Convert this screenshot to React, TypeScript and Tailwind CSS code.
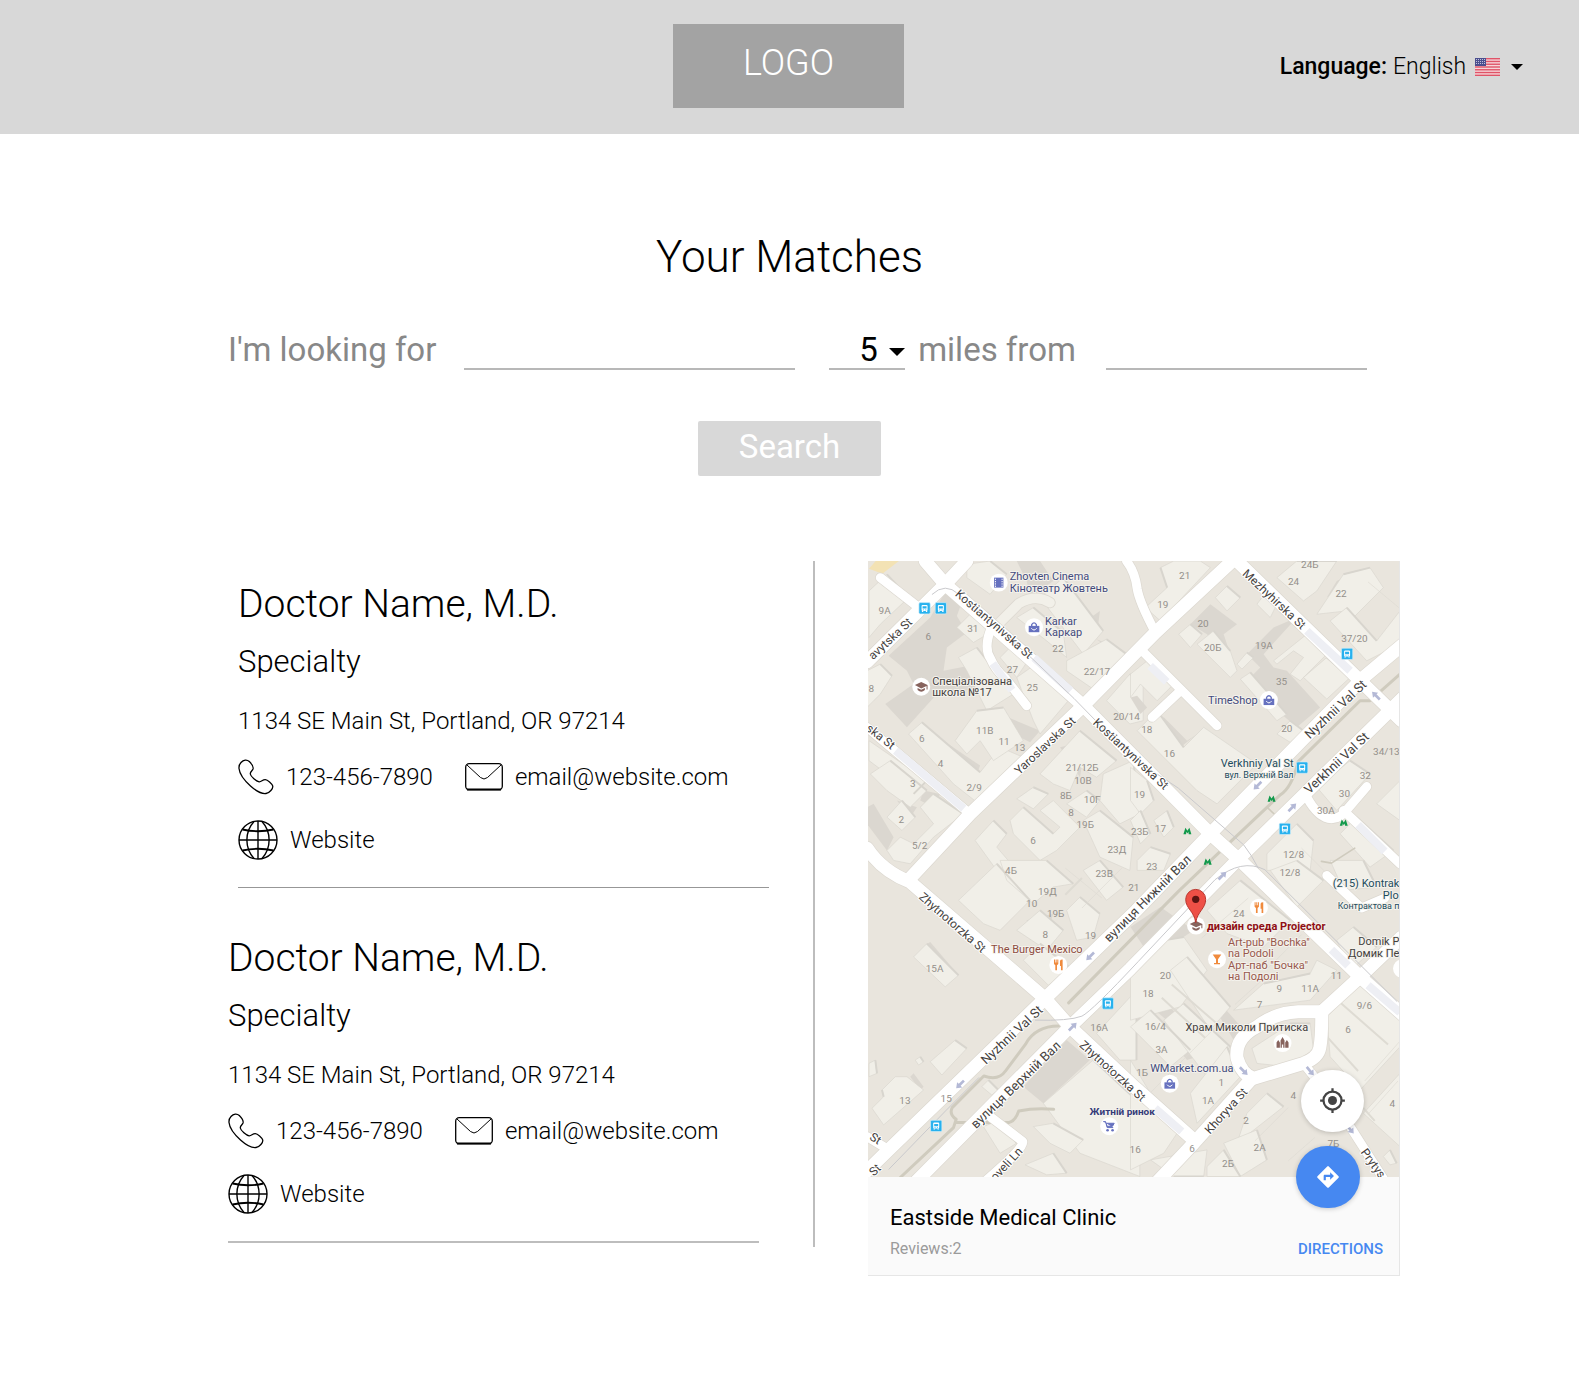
import React from "react";

type Pt = [number, number];

const Caret = ({ className }: { className: string }) => (
  <svg viewBox="0 0 16 8" className={className} aria-hidden="true">
    <path d="M0 0H16L8 8Z" fill="#000" />
  </svg>
);

const UsFlag = () => (
  <svg viewBox="0 0 25 18" className="h-[18px] w-[25px]" aria-hidden="true">
    <rect width="25" height="18" rx="1" fill="#f6d5d9" />
    {[0, 1, 2, 3, 4, 5, 6].map((i) => (
      <rect key={i} y={i * 2.77} width="25" height="1.39" fill="#df5468" />
    ))}
    <rect width="11" height="8" fill="#4b4f8f" />
    {[1.5, 3.5, 5.5].map((y) =>
      [1.5, 3.5, 5.5, 7.5, 9.5].map((x) => <circle key={`${x}-${y}`} cx={x} cy={y} r="0.5" fill="#e6e6f2" />)
    )}
  </svg>
);

const PhoneIcon = () => (
  <svg viewBox="0 0 36 36" className="h-9 w-9 shrink-0" fill="none" stroke="#000" strokeWidth="1.3" strokeLinejoin="round" aria-hidden="true">
    <path d="M3 3.5C5.500 .6 9 .3 11.300 2.500C13.500 4.700 15.800 7.500 15 10C14.300 12 12 12.600 12.300 15C12.700 17.500 18.500 22.500 21.200 22.800C23.500 23 24.500 20.500 27.300 20.600C29.500 20.700 34 24.500 34.700 27C35.300 29.500 31.500 34 28 34.500C24 35 17.500 31.500 12.500 27C7 22 1.500 14.500 1 9.500C.8 7 1.500 5 3 3.500Z" />
  </svg>
);

const MailIcon = () => (
  <svg viewBox="0 0 38 28" className="h-7 w-[38px] shrink-0" fill="none" stroke="#000" aria-hidden="true">
    <rect x="0.7" y="0.7" width="36.600" height="26" rx="3.500" strokeWidth="1.300" />
    <path d="M2 26.500H36" strokeWidth="2" />
    <path d="M2 2L15.500 14.500Q19 17.500 22.500 14.500L36 2" strokeWidth="1" />
  </svg>
);

const GlobeIcon = () => (
  <svg viewBox="0 0 40 40" className="h-10 w-10 shrink-0" fill="none" stroke="#000" strokeWidth="1.400" aria-hidden="true">
    <circle cx="20" cy="20" r="19" />
    <path d="M20 1V39M1 20H39" />
    <path d="M16 1.500C6.500 12 6.500 28 16 38.500M24 1.500C33.500 12 33.500 28 24 38.500" />
    <path d="M4.500 9.500Q20 13 35.500 9.500M4.500 30.500Q20 27 35.500 30.500" strokeWidth="1.800" />
  </svg>
);

function DoctorCard({ className }: { className: string }) {
  return (
    <article className={className}>
      <h2 className="text-[39px] leading-[48px]">Doctor Name, M.D.</h2>
      <p className="mt-[14px] text-[31px] leading-10">Specialty</p>
      <p className="mt-[23px] text-2xl leading-8">1134 SE Main St, Portland, OR 97214</p>
      <div className="mt-5 flex h-10 items-center text-2xl leading-8">
        <a href="tel:123-456-7890" className="flex items-center gap-3">
          <PhoneIcon />
          123-456-7890
        </a>
        <a href="mailto:email@website.com" className="ml-8 flex items-center gap-3">
          <MailIcon />
          email@website.com
        </a>
      </div>
      <a href="#website" className="mt-[23px] flex h-10 w-fit items-center gap-3 text-2xl leading-8">
        <GlobeIcon />
        Website
      </a>
    </article>
  );
}

/* Map artwork is drawn on a 1596 x 1848 grid, three units to a label unit. */

const minorRoads = [
  "M-6 497L304 757",
  "M34 47L150 137",
  "M774 -3Q800 30 806 80Q812 120 861 212",
  "M816 262L1046 492M936 387L851 467",
  "M364 207Q345 260 365 290Q380 325 410 350L474 432",
  "M1316 707Q1350 770 1390 772Q1420 770 1440 740L1496 675",
  "M1426 747L1596 907",
  "M1376 942L1480 1040L1550 1010",
  "M-6 1727L60 1767",
  "M364 1667L462 1742Q468 1760 354 1857",
  "M1306 1507L1380 1600L1446 1697L1550 1860",
];
const majorRoads = [
  "M294 -3L229 67L-6 300",
  "M1110 -20L861 212L644 432L304 757L124 950",
  "M-6 860Q40 930 124 962L529 1312L604 1397L800 1580L976 1737",
  "M1096 -13L1600 477",
  "M1600 1128L1476 1247L1361 1352",
  "M1361 1352H1290Q1220 1355 1166 1397Q1100 1430 1106 1490Q1120 1540 1156 1552L1306 1507Q1350 1490 1355 1460Q1361 1430 1361 1352",
  "M1151 1552L976 1747L860 1870",
  "M169 -3L229 67L644 432L1026 817L1126 907L1476 1247L1606 1362",
  "M1606 247L1486 347L1026 817L804 1047L529 1312L69 1757L-16 1840",
  "M1606 407L1116 887L786 1222L604 1397L144 1860",
];

const lots = {
  nw: [
    "6,90 60,40 125,110 40,190 6,230", "0,330 40,310 75,345 40,400 0,440", "270,200 320,150 370,190 370,215 320,245",
    "300,10 370,0 420,40 370,100 300,50", "450,170 500,140 590,215 600,290 540,240", "520,110 590,50 710,210 650,280",
    "600,300 720,235 780,280 680,385 600,330", "400,290 440,250 490,290 450,350", "450,350 500,315 605,420 520,520 500,480",
    "275,290 330,260 440,400 360,450 300,330", "125,520 165,485 340,635 400,560 470,590 330,725 260,670",
    "265,540 330,450 410,440 470,540 380,600 340,540 300,580", "6,540 180,660 140,700 6,600", "10,640 70,600 180,690 130,740 60,690",
    "60,770 105,720 145,770 105,810", "160,740 200,700 290,760 200,830 130,910 80,900 60,870 100,830 140,850 200,790",
    "520,640 640,510 750,600 690,650 640,620 610,690 560,670", "450,715 500,680 545,700 500,745", "430,780 470,740 560,820 580,800 520,750 560,720 640,800 570,870 520,900 440,820",
    "325,840 380,780 420,820 390,860 450,930 390,930", "600,730 660,690 700,720 660,770", "720,420 790,340 830,360 830,480 790,490",
    "650,780 700,750 800,830 790,930 700,890", "710,640 800,600 820,760 760,790 700,720",
  ],
  ne: [
    "45,140 110,80 90,20 130,0 210,0 240,20 90,180", "255,110 290,75 330,110 290,150", "145,220 180,190 215,220 180,260",
    "200,250 250,210 300,270 320,330 300,350", "380,130 410,90 440,130 420,170", "440,50 500,0 620,0 560,90 520,120",
    "560,160 640,40 720,20 760,80 670,170 650,150", "600,180 650,140 740,240 810,150 810,250 710,300", "430,300 530,220 590,280 510,360 480,340 520,290 490,270 440,310",
    "320,310 350,275 370,290 335,325", "520,350 590,290 660,350 590,415", "330,355 360,335 470,460 440,480", "440,520 480,480 520,510 480,545",
    "0,340 50,300 130,370 80,420 30,370 0,410", "20,510 80,450 160,560 220,500 380,610 260,730 200,690", "0,620 50,660 70,720 30,760 0,720",
    "0,780 30,750 60,820 30,850", "70,780 110,750 130,800 100,830", "20,900 60,860 120,880 100,930 20,930", "410,880 500,790 550,840 540,930 410,930",
    "560,680 660,600 720,640 620,750", "740,730 810,660 810,780", "630,820 680,770 790,870 720,920",
  ],
  sw: [
    "275,120 390,10 490,120 400,210 350,190", "400,0 540,0 620,70 560,80 500,130 420,60", "450,210 520,150 590,210 540,270",
    "600,150 640,110 700,160 680,230 630,240", "650,30 700,0 770,80 720,120", "470,300 520,250 620,330 545,375", "140,290 180,250 275,345 235,380",
    "190,605 265,540 300,565 225,645", "145,600 160,590 170,605 155,615", "15,745 50,710 45,690 85,650 120,650 170,690 50,795",
    "6,610 25,600 30,640 6,650", "345,680 365,660 395,690 375,705", "530,730 680,600 820,730 820,950 640,880", "690,520 810,390 810,600 760,600",
    "500,800 560,790 650,840 610,880 550,850", "475,915 560,880 600,940 540,945", "350,800 400,780 450,850 400,880",
  ],
  se: [
    "0,350 100,240 160,230 230,330 150,440 0,480", "120,330 170,290 300,440 240,510", "0,500 60,450 180,570 120,620", "100,480 160,430 300,560 230,650",
    "180,700 290,560 330,650 200,790", "230,150 330,60 480,180 400,260 290,220", "420,30 500,0 580,60 500,140", "310,450 400,370 540,340 560,300 620,330 540,420",
    "365,565 480,490 540,490 550,570 470,620 380,610", "590,470 690,370 810,470 810,560 690,690 600,590", "700,760 810,640 810,860", "350,760 410,700 460,740 320,850",
    "60,900 130,950 220,950 230,870", "280,850 380,810 410,900 330,950", "230,920 280,870 330,950 230,950", "760,890 780,870 800,910 780,915", "0,600 60,700 160,790 100,880 0,930",
    "600,0 700,0 740,80 640,90", "620,240 670,200 740,260 660,330",
  ],
};
const shades = {
  nw: [
    "65,285 190,170 240,85 290,110 270,165 300,215 240,260 230,330 330,310 360,380 210,400 120,500 55,430 140,370 120,330", "0,740 20,730 80,830 60,870 0,790", "170,500 340,615 330,640 150,510",
    "355,430 400,460 520,510 490,545 400,500", "615,210 700,150 690,230", "690,235 770,270 750,280", "170,690 220,700 200,740 160,720", "90,720 150,740 130,770",
    "580,560 600,555 650,590 640,650", "450,0 520,0 560,60 490,110 480,60",
  ],
  ne: [
    "180,190 240,130 320,190 280,220 300,280 260,260 230,220", "430,200 500,170 400,280 430,320 470,330 570,440 500,500 430,440 350,360 390,320 350,280",
    "0,410 20,405 50,440 30,460", "80,480 100,470 170,540 200,520 150,560", "620,60 640,50 660,70 590,110", "550,370 580,350 600,370 580,390", "220,610 235,598 256,618 242,630",
  ],
  sw: ["175,255 190,245 275,345 262,350", "400,80 350,100 340,150 380,180 350,130", "470,680 600,540 670,600 530,730", "130,650 140,640 170,680 160,690", "480,180 560,160 540,220 490,240", "680,600 820,710 820,740", "770,510 820,450 820,500"],
  se: ["0,200 90,140 190,210 130,250 60,290", "40,420 70,400 150,470 120,490", "110,530 140,520 200,590 170,600", "250,440 270,430 350,520 310,540", "320,180 345,165 390,200 370,220", "620,450 690,390 790,520 740,530", "700,540 760,590 690,640"],
};
const origins: Record<keyof typeof lots, string> = {
  nw: "translate(-6 -3)",
  ne: "translate(786 -3)",
  sw: "translate(-6 897)",
  se: "translate(786 897)",
};
const quadrants = ["nw", "ne", "sw", "se"] as const;

const houseNumbers: [string, number, number][] = [
  ["9A", 47, 145], ["6", 178, 222], ["31", 312, 197], ["22", 568, 259], ["27", 431, 321], ["22/17", 685, 328], ["25", 491, 375],
  ["20/14", 774, 464], ["11В", 348, 506], ["11", 406, 539], ["13", 453, 557], ["6", 159, 528], ["4", 215, 603], ["2/9", 316, 675],
  ["3", 132, 665], ["2", 97, 773], ["5/2", 152, 850], ["21/12Б", 641, 617], ["10В", 643, 654], ["8Б", 592, 701], ["10Г", 671, 713],
  ["8", 607, 752], ["19Б", 650, 788], ["6", 493, 835], ["23Д", 745, 863], ["4Б", 427, 925], ["8", 7, 380],
  ["21", 949, 40], ["19", 883, 127], ["20", 1004, 182], ["20Б", 1033, 257], ["19A", 1187, 250], ["24", 1276, 57], ["22", 1419, 92],
  ["24Б", 1325, 6], ["37/20", 1459, 230], ["35", 1240, 357], ["20", 1256, 500], ["18", 835, 502], ["16", 903, 575], ["19", 813, 698],
  ["23Б", 814, 809], ["17", 876, 799], ["23", 850, 914], ["34/13", 1555, 568], ["32", 1492, 639], ["30", 1429, 695], ["30A", 1373, 746],
  ["12/8", 1276, 877], ["12/8", 1265, 933], ["23В", 707, 935], ["19Д", 536, 988], ["21", 796, 978], ["10", 489, 1025], ["19Б", 561, 1054],
  ["8", 530, 1118], ["19", 666, 1122], ["15A", 197, 1221], ["16A", 692, 1397], ["13", 108, 1616], ["15", 232, 1612], ["24", 1112, 1055],
  ["20", 891, 1241], ["18", 839, 1295], ["11", 1405, 1240], ["9", 1233, 1282], ["11A", 1326, 1279], ["7", 1174, 1328], ["9/6", 1489, 1331],
  ["16/4", 861, 1394], ["6", 1440, 1403], ["3A", 879, 1465], ["1Б", 821, 1532], ["1", 1059, 1564], ["4", 1275, 1602], ["1A", 1019, 1617],
  ["4", 1573, 1625], ["2", 1133, 1678], ["16", 800, 1765], ["6", 971, 1762], ["2A", 1174, 1757], ["7Б", 1396, 1747], ["2Б", 1079, 1807],
];

const streets: [string, number, number, number, number, "start" | "middle" | "end"][] = [
  ["Kostiantynivska St", 376, 187, 41, 12, "middle"],
  ["Kostiantynivska St", 787, 577, 43, 12, "middle"],
  ["Mezhyhirska St", 1218, 112, 43, 12, "middle"],
  ["avytska St", 124, 175, -43, 12, "end"],
  ["ska St", 74, 555, 38, 12, "end"],
  ["Yaroslavska St", 529, 552, -43, 12, "middle"],
  ["Nyzhnii Val St", 1403, 444, -43, 13, "middle"],
  ["Verkhnii Val St", 1406, 605, -43, 13, "middle"],
  ["вулиця Нижній Вал", 838, 1012, -45, 13, "middle"],
  ["Zhytnotorzka St", 251, 1084, 41, 12, "middle"],
  ["Nyzhnii Val St", 430, 1422, -43, 13, "middle"],
  ["вулиця Верхній Вал", 442, 1572, -44, 13, "middle"],
  ["Zhytnotorzka St", 732, 1530, 42, 12, "middle"],
  ["Khoryva St", 1073, 1650, -48, 12, "middle"],
  ["Prytys", 1486, 1767, 54, 12, "start"],
  ["oveli Ln", 455, 1765, -47, 12, "end"],
  ["St", 30, 1816, -43, 12, "end"],
  ["St", 34, 1742, 32, 12, "end"],
];

const places: [string, number, number, string, number, "start" | "middle" | "end", number][] = [
  ["Zhovten Cinema", 423, 43, "#434a7c", 11, "start", 400],
  ["Кінотеатр Жовтень", 423, 78, "#434a7c", 11, "start", 400],
  ["Karkar", 529, 177, "#434a7c", 11, "start", 400],
  ["Каркар", 529, 211, "#434a7c", 11, "start", 400],
  ["Спеціалізована", 190, 357, "#43403d", 11, "start", 400],
  ["школа №17", 190, 391, "#43403d", 11, "start", 400],
  ["TimeShop", 1168, 414, "#434a7c", 11, "end", 400],
  ["Verkhniy Val St", 1276, 604, "#1d4c5d", 11, "end", 400],
  ["вул. Верхній Вал", 1276, 636, "#1d4c5d", 9, "end", 400],
  ["The Burger Mexico", 367, 1163, "#8d4b40", 11, "start", 400],
  ["(215) Kontrak", 1594, 966, "#1d4c5d", 11, "end", 400],
  ["Plo", 1592, 1000, "#1d4c5d", 11, "end", 400],
  ["Контрактова п", 1594, 1032, "#1d4c5d", 9, "end", 400],
  ["дизайн среда Projector", 1016, 1093, "#8f0f14", 11, "start", 700],
  ["Art-pub \"Bochka\"", 1079, 1141, "#98584c", 11, "start", 400],
  ["na Podoli", 1079, 1175, "#98584c", 11, "start", 400],
  ["Арт-паб \"Бочка\"", 1079, 1210, "#98584c", 11, "start", 400],
  ["на Подолі", 1079, 1244, "#98584c", 11, "start", 400],
  ["Domik P", 1594, 1140, "#43403d", 11, "end", 400],
  ["Домик Пе", 1594, 1174, "#43403d", 11, "end", 400],
  ["Храм Миколи Притиска", 951, 1398, "#43403d", 11, "start", 400],
  ["WMarket.com.ua", 845, 1520, "#434a7c", 11, "start", 400],
  ["Житній ринок", 663, 1649, "#353b78", 10, "start", 700],
];

const busStops: Pt[] = [[167, 139], [216, 139], [1437, 276], [1302, 618], [1250, 802], [718, 1327], [202, 1695]];
const metros: Pt[] = [[1210, 712], [957, 809], [1427, 784], [1018, 901]];
const arrows: [number, number, number][] = [
  [1524, 402, -135], [1168, 672, 135], [1272, 738, -45], [1062, 943, -45], [665, 1185, 135], [274, 1570, 135], [612, 1397, -45], [1126, 1530, 45], [1326, 1530, 50], [1446, 1705, 50],
];

const Bag = ({ x, y }: { x: number; y: number }) => (
  <g transform={`translate(${x} ${y})`}>
    <circle r="27" fill="#fff" />
    <path d="M-7 -3V-8Q0 -18 7 -8V-3" fill="none" stroke="#6671bf" strokeWidth="4" />
    <path d="M-16 -4H16V15H-16Z" fill="#6671bf" />
    <path d="M-8 3Q0 14 8 3" fill="none" stroke="#fff" strokeWidth="3" />
  </g>
);

const Cutlery = ({ x, y }: { x: number; y: number }) => (
  <g transform={`translate(${x} ${y})`} fill="#f08a3c">
    <circle r="27" fill="#fff" />
    <path d="M-13 -16h3v9h2v-9h3v9h2v-9h3v13l-4 4v15h-5v-15l-4 -4ZM5 -12q1 -4 8 -4v32h-5v-13h-3Z" />
  </g>
);

const School = ({ x, y }: { x: number; y: number }) => (
  <g transform={`translate(${x} ${y})`} fill="#87635d">
    <circle r="27" fill="#fff" />
    <path d="M-19 -5L0 -14L19 -5V8H16V-2L0 5ZM-11 4L0 9L11 4V10Q0 20 -11 10Z" />
  </g>
);

function CityMap() {
  return (
    <svg viewBox="-1 -1 532 617" className="block w-full" role="img" aria-label="Map of the clinic's neighbourhood" fontFamily="Roboto, sans-serif">
      <rect x="-1" y="-1" width="533" height="618" fill="#e9e5dd" />
      <g transform="scale(0.333333)" strokeLinejoin="round">
        <path d="M20 -3H90L40 35L0 20Z" fill="#f3e2b4" />
        {quadrants.map((q) => (
          <g key={q} transform={origins[q]}>
            {shades[q].map((p) => <polygon key={p} points={p} fill="#dbd7d0" />)}
            {lots[q].map((p) => <polygon key={p} points={p} fill="#f1efe8" stroke="#d9d6ce" strokeWidth="2" />)}
            {lots[q].map((p) => (
              <polyline key={p} points={p.split(" ").slice(1, 3).join(" ")} fill="none" stroke="#d8d5ce" strokeWidth="6" />
            ))}
          </g>
        ))}
        <g fill="none" stroke="#dedbd3" strokeWidth="2">
          <path d="M844 1597L1040 1400M1000 1130L1140 1010M1200 1220L1300 1120M1160 1740L1260 1640M1260 1800L1340 1730M1100 1330L1200 1240M1490 1560L1596 1440M1500 1660L1590 1560M640 1040L760 920M590 920L700 1010M1500 60L1596 140M1300 860L1400 960" />
          <path d="M880 1310L1010 1430M910 1270L1060 1400M1240 1020L1340 1120M1370 1420L1470 1530M1400 1310L1560 1450M1450 1600L1520 1680M590 1000L640 950" strokeWidth="6" />
        </g>
        <g fill="none" stroke="#cfcbbe" strokeWidth="9" strokeLinecap="round">
          <path d="M1596 337L1506 417H1476L1290 600Q1270 680 1236 700L1040 885L930 990L600 1325" />
          <path d="M570 1395Q500 1395 470 1450L410 1530Q390 1560 345 1545L250 1640Q240 1660 262 1675L254 1700L94 1850M262 1685H420Q440 1680 450 1650Q500 1640 555 1645" />
          <path d="M1196 737L1226 765M1050 950H1026M1360 900L1390 905L1460 860" strokeWidth="5" />
        </g>
        <g fill="none" strokeLinecap="round">
          <path d="M544 122Q500 95 450 125L370 205" stroke="#ddd9d1" strokeWidth="34" />
          <path d="M544 122Q500 95 450 125L370 205" stroke="#f2f0e9" strokeWidth="29" />
          {minorRoads.map((d) => <path key={d} d={d} stroke="#dcd8d0" strokeWidth="31" />)}
          {majorRoads.map((d) => <path key={d} d={d} stroke="#dcd8d0" strokeWidth="43" />)}
          {minorRoads.map((d) => <path key={d} d={d} stroke="#fff" strokeWidth="27" />)}
          {majorRoads.map((d) => <path key={d} d={d} stroke="#fff" strokeWidth="39" />)}
          <path d="M80 567L285 741M496 288L606 387M372 305L430 385M845 312L895 360M1316 207L1446 327M1470 790L1550 870M1390 1165L1440 1213M1500 1272L1596 1354M860 1642L940 1712" stroke="#eeeff4" strokeWidth="24" strokeLinecap="butt" />
          <path d="M190 97Q229 60 270 97L490 290L616 410L786 584L930 680L1126 850Q1150 880 1170 920M500 1377Q600 1380 640 1365Q670 1350 810 1200L1040 955Q1120 890 1190 925L1586 1320M60 1825L230 1650L330 1550" stroke="#c9c9cc" strokeWidth="3" />
        </g>
        {arrows.map(([x, y, r]) => (
          <path key={`${x}-${y}`} d="M-16 -4H2V-11L17 0L2 11V4H-16Z" transform={`translate(${x} ${y}) rotate(${r})`} fill="#b4b9d6" />
        ))}
        {busStops.map(([x, y]) => (
          <g key={`${x}-${y}`} transform={`translate(${x} ${y})`}>
            <rect x="-17" y="-17" width="34" height="34" rx="4" fill="#27b1ee" stroke="#d7eef8" strokeWidth="2" />
            <rect x="-9" y="-10" width="18" height="18" rx="3" fill="#fff" />
            <path d="M-6 -6H6V1H-6ZM-5 4H-2V6H-5ZM2 4H5V6H2Z" fill="#27b1ee" />
            <path d="M-8 8H-4V11H-8ZM4 8H8V11H4Z" fill="#fff" />
          </g>
        ))}
        {metros.map(([x, y]) => (
          <path key={`${x}-${y}`} d="M-12 9L-6 -10L0 -1L6 -10L12 9H4L3 2L0 7L-3 2L-4 9Z" transform={`translate(${x} ${y})`} fill="#12994b" />
        ))}
        <g transform="translate(390 62)">
          <circle r="27" fill="#fff" />
          <path d="M-14 -15H14V15H-14Z" fill="#6671bf" />
          <path d="M-10 -12V13M10 -12V13" stroke="#fff" strokeWidth="3" strokeDasharray="4 3" />
        </g>
        <Bag x={496} y={196} />
        <Bag x={1202} y={415} />
        <Bag x={904} y={1568} />
        <School x={157} y={375} />
        <School x={983} y={1093} />
        <Cutlery x={569} y={1211} />
        <Cutlery x={1172} y={1039} />
        <g transform="translate(1046 1194)">
          <circle r="27" fill="#fff" />
          <path d="M-13 -14H13L3 0V11H9V15H-9V11H-3V0Z" fill="#f08a3c" />
        </g>
        <g transform="translate(1243 1446)" fill="#87635d">
          <circle r="27" fill="#fff" />
          <path d="M-18 14V-2L-13 -9L-8 -2V14ZM-6 14V-8L0 -18L6 -8V14H2V4H-2V14ZM8 14V-2L13 -9L18 -2V14Z" />
        </g>
        <g transform="translate(722 1696)">
          <circle r="27" fill="#fff" />
          <path d="M-18 -14H-11L-6 4H12M-9 -9H15L10 0H-7Z" fill="#6671bf" stroke="#6671bf" strokeWidth="3" />
          <circle cx="-5" cy="12" r="4" fill="#6671bf" />
          <circle cx="10" cy="12" r="4" fill="#6671bf" />
        </g>
        <circle cx="1602" cy="1222" r="27" fill="#fff" />
        <path d="M982 1084C978 1050 952 1042 952 1014A30 30 0 0 1 1012 1014C1012 1042 987 1050 982 1084Z" fill="#ee5046" stroke="#b8352d" strokeWidth="3" />
        <circle cx="982" cy="1014" r="11" fill="#5b1411" />
      </g>
      {houseNumbers.map(([t, x, y]) => (
        <text key={`${t}-${x}-${y}`} x={x / 3} y={y / 3 + 4} fontSize="10" fill="#94908b" textAnchor="middle">{t}</text>
      ))}
      <g fill="#454240" stroke="#fff" strokeWidth="2" strokeLinejoin="round" paintOrder="stroke">
        {streets.map(([t, x, y, r, size, anchor]) => (
          <text key={`${t}-${x}`} transform={`translate(${x / 3} ${y / 3}) rotate(${r})`} y="4" fontSize={size} textAnchor={anchor}>{t}</text>
        ))}
      </g>
      <g stroke="#f4f2ec" strokeWidth="2" strokeLinejoin="round" paintOrder="stroke">
        {places.map(([t, x, y, fill, size, anchor, weight]) => (
          <text key={`${t}-${x}`} x={x / 3} y={y / 3 + 4} fill={fill} fontSize={size} fontWeight={weight} textAnchor={anchor}>{t}</text>
        ))}
      </g>
    </svg>
  );
}

function ClinicMap() {
  return (
    <section className="h-fit border-r border-b border-[#e6e6e6] bg-[#fafafa] font-normal">
      <div className="relative">
        <CityMap />
        <button type="button" aria-label="Show my location" className="absolute right-[35px] bottom-[45px] flex h-[62px] w-[63px] items-center justify-center rounded-full bg-white shadow-[0_1px_5px_rgba(0,0,0,0.2)]">
          <svg viewBox="0 0 24 24" className="h-[27px] w-[27px]" fill="none" stroke="#444" strokeWidth="2" aria-hidden="true">
            <circle cx="12" cy="12" r="8" />
            <circle cx="12" cy="12" r="4" fill="#444" stroke="none" />
            <path d="M12 1V4M12 20V23M1 12H4M20 12H23" />
          </svg>
        </button>
        <button type="button" aria-label="Start navigation" className="absolute right-[39px] -bottom-[31px] flex h-[62px] w-16 items-center justify-center rounded-full bg-[#4688f1] shadow-[0_1px_5px_rgba(0,0,0,0.2)]">
          <svg viewBox="0 0 24 24" className="h-[26px] w-[26px]" aria-hidden="true">
            <path fill="#fff" d="M21.710 11.290l-9-9a1 1 0 0 0-1.410 0l-9 9a1 1 0 0 0 0 1.410l9 9c.39.390 1.020.390 1.410 0l9-9a1 1 0 0 0 0-1.410zM14 14.500V12h-4v3H8v-4c0-.550.450-1 1-1h5V7.500l3.500 3.500-3.500 3.500z" />
          </svg>
        </button>
      </div>
      <div className="pt-[27px] pr-4 pb-[14px] pl-[22px]">
        <h2 className="text-[22px] leading-7">Eastside Medical Clinic</h2>
        <div className="mt-[5px] flex items-center justify-between leading-6">
          <span className="text-base text-[#9b9b9b]">Reviews:2</span>
          <a href="#directions" className="text-[15px] font-medium text-[#4688f1]">DIRECTIONS</a>
        </div>
      </div>
    </section>
  );
}

export default function App() {
  return (
    <div className="min-h-screen bg-white font-['Roboto',sans-serif] font-light text-black">
      <header className="grid h-[134px] grid-cols-[1fr_231px_1fr] items-center bg-[#d8d8d8] pr-[56px] pl-[54px]">
        <a href="#home" className="col-start-2 -mt-[2px] flex h-[84px] items-center justify-center bg-[#a3a3a3] pb-[6px] text-[36px] leading-10 text-white">LOGO</a>
        <div className="flex items-center justify-end gap-[6px] text-[23px] leading-8">
          <label htmlFor="language" className="font-medium">Language:</label>
          <div className="relative">
            <select id="language" className="block appearance-none bg-transparent pr-[56px]">
              <option>English</option>
            </select>
            <span className="pointer-events-none absolute inset-y-0 right-0 flex items-center gap-[11px]">
              <UsFlag />
              <Caret className="h-[6px] w-3" />
            </span>
          </div>
        </div>
      </header>

      <main>
        <h1 className="mt-[95px] text-center text-[44px] leading-[56px]">Your Matches</h1>

        <form className="mt-[37px]" onSubmit={(e) => e.preventDefault()}>
          <div className="flex items-stretch pr-[212px] pl-[228px] text-[33px] leading-[40px] font-normal text-[#888]">
            <label htmlFor="what" className="h-12 pt-2">I'm looking for</label>
            <input id="what" className="ml-7 h-12 min-w-0 flex-[332] border-b-2 border-[#b8b8b8] text-black outline-none" />
            <div className="relative ml-[34px] h-12 w-[76px] border-b-2 border-[#b8b8b8]">
              <select aria-label="Distance in miles" className="block h-[46px] w-full appearance-none bg-transparent pt-[10px] pl-[30px] leading-9 text-black">
                <option>5</option>
              </select>
              <Caret className="pointer-events-none absolute right-0 bottom-3 h-2 w-4" />
            </div>
            <label htmlFor="where" className="ml-[13px] h-12 pt-2">miles from</label>
            <input id="where" className="ml-[30px] h-12 min-w-0 flex-[262] border-b-2 border-[#b8b8b8] text-black outline-none" />
          </div>
          <button type="submit" className="mx-auto mt-[51px] block h-[55px] w-[183px] rounded-[2px] bg-[#d8d8d8] pb-1 text-[33px] leading-10 font-normal text-white">Search</button>
        </form>

        <div className="mt-[85px] grid grid-cols-[587fr_532fr] items-start gap-x-[53px] pr-[179px] pb-[103px] pl-[228px]">
          <section className="border-r-2 border-[#bdbdbd] pt-[19px] pr-[44px]">
            <DoctorCard className="ml-[10px] border-b border-[#979797] pb-[27px]" />
            <DoctorCard className="mt-[46px] mr-[10px] border-b-2 border-[#bdbdbd] pb-[27px]" />
            <div className="h-1" />
          </section>
          <ClinicMap />
        </div>
      </main>
    </div>
  );
}
